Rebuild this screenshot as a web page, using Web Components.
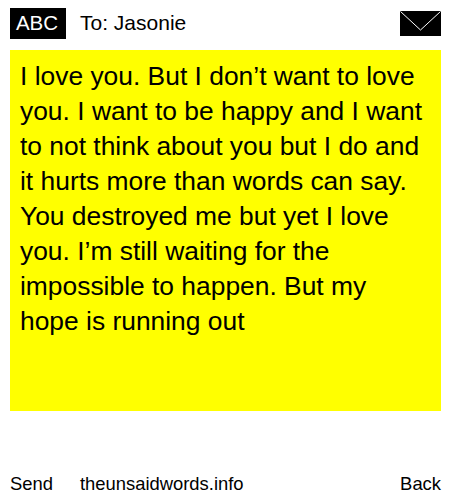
<!DOCTYPE html>
<html><head><meta charset="utf-8"><style>
html,body{margin:0;padding:0;background:#fff}
body{font-family:"Liberation Sans",Arial,sans-serif;color:#000;width:450px;height:500px;overflow:hidden}
</style></head><body>
<msg-screen>
<msg-header></msg-header>
<msg-note>I love you. But I don’t want to love you. I want to be happy and I want to not think about you but I do and it hurts more than words can say. You destroyed me but yet I love you. I’m still waiting for the impossible to happen. But my hope is running out</msg-note>
<msg-footer></msg-footer>
</msg-screen>
<script>
function def(name,html){customElements.define(name,class extends HTMLElement{constructor(){super();this.attachShadow({mode:'open'}).innerHTML=html}})}
def('msg-screen',`<style>:host{display:flex;flex-direction:column;width:450px;height:500px;padding:8px 9px 0 10px;box-sizing:border-box}</style><slot></slot>`);
def('msg-header',`<style>
:host{display:flex;align-items:center;height:31px;margin-bottom:11px}
.abc{background:#000;color:#fff;width:56px;height:31px;padding:0 2px 1px 0;box-sizing:border-box;display:flex;align-items:center;justify-content:center;font-size:20.5px}
.to{margin-left:14px;font-size:21px;flex:1;padding-bottom:1px}
svg{display:block;width:41px;height:25px}
</style><div class="abc">ABC</div><div class="to">To: Jasonie</div>
<svg viewBox="0 0 41 25"><rect width="41" height="25" fill="#000"/><path d="M0.5 0.5L20.5 19L40.5 0.5" fill="none" stroke="#fff" stroke-width="1"/></svg>`);
def('msg-note',`<style>
:host{display:block;background:#ff0;height:361px;box-sizing:border-box;padding:9px 10px 0 10px;font-size:26.4px;line-height:35px}
</style><slot></slot>`);
def('msg-footer',`<style>
:host{display:flex;margin-top:62px;font-size:18.4px;line-height:21px;justify-content:space-between}
.l{display:flex;gap:27px}
</style><div class="l"><span>Send</span><span>theunsaidwords.info</span></div><span>Back</span>`);
</script>
</body></html>
